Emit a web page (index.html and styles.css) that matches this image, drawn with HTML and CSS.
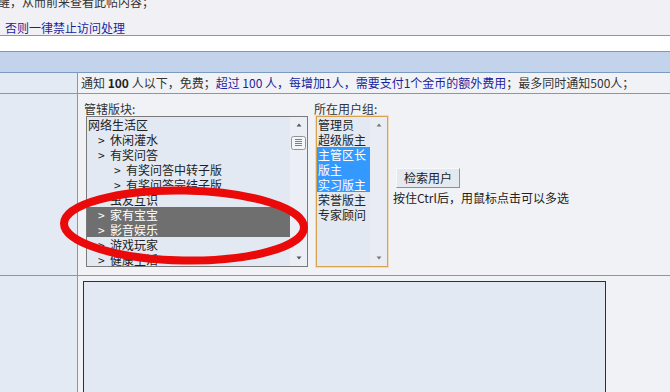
FILE: index.html
```html
<!DOCTYPE html>
<html lang="zh-CN">

<head>
    <meta charset="UTF-8">
    <meta name="viewport" content="width=device-width, initial-scale=1.0">
    <title>短消息通知</title>
    <link rel="stylesheet" href="styles.css">
</head>

<body>

    <div class="page">
        <div class="notice">
            <p class="notice-cut">醒，从而前来查看此帖内容；</p>
            <p class="notice-rule">否则一律禁止访问处理</p>
        </div>
        <div class="strip"></div>
        <div class="header"></div>

        <div class="row row-info">
            <div class="side"></div>
            <div class="main">通知 <b>100</b> 人以下，免费；<span class="paid">超过 100 人，每增加1人，需要支付1个金币的额外费用</span>；最多同时通知500人；</div>
        </div>

        <div class="row row-pick">
            <div class="side"></div>
            <div class="main picker">
                <div class="field">
                    <label>管辖版块:</label>
                    <div class="list list-forum">
                        <ul>
                            <li class="lv0">网络生活区</li>
                            <li class="lv1"><span class="gt">&gt;</span>休闲灌水</li>
                            <li class="lv1"><span class="gt">&gt;</span>有奖问答</li>
                            <li class="lv2"><span class="gt">&gt;</span>有奖问答中转子版</li>
                            <li class="lv2"><span class="gt">&gt;</span>有奖问答完结子版</li>
                            <li class="lv1"><span class="gt">&gt;</span>虫友互识</li>
                            <li class="lv1 on"><span class="gt">&gt;</span>家有宝宝</li>
                            <li class="lv1 on"><span class="gt">&gt;</span>影音娱乐</li>
                            <li class="lv1"><span class="gt">&gt;</span>游戏玩家</li>
                            <li class="lv1"><span class="gt">&gt;</span>健康生活</li>
                        </ul>
                        <svg class="scroll" width="17" height="149" viewBox="0 0 17 149">
                            <rect x="0" y="0" width="17" height="149" fill="#ebeef4" />
                            <polygon points="6.5,9.5 11.5,9.5 9,6.5" fill="#555" />
                            <rect x="1.5" y="19.5" width="14" height="13" rx="2" fill="#f4f6f9" stroke="#8f959e" />
                            <path d="M5 22.5h7M5 24.5h7M5 26.5h7M5 28.5h7" stroke="#7a808a" />
                            <polygon points="6.5,139.5 11.5,139.5 9,142.5" fill="#555" />
                        </svg>
                    </div>
                </div>

                <div class="field field-group">
                    <label>所在用户组:</label>
                    <div class="list list-group">
                        <ul>
                            <li>管理员</li>
                            <li>超级版主</li>
                            <li class="on">主管区长</li>
                            <li class="on">版主</li>
                            <li class="on">实习版主</li>
                            <li>荣誉版主</li>
                            <li>专家顾问</li>
                        </ul>
                        <svg class="scroll" width="17" height="149" viewBox="0 0 17 149">
                            <rect x="0" y="0" width="17" height="149" fill="#e9edf3" />
                            <polygon points="6.5,9.5 11.5,9.5 9,6.5" fill="#777" />
                            <polygon points="6.5,139.5 11.5,139.5 9,142.5" fill="#777" />
                        </svg>
                    </div>
                </div>

                <div class="actions">
                    <button class="search-btn">检索用户</button>
                    <p class="hint">按住Ctrl后，用鼠标点击可以多选</p>
                </div>
            </div>
        </div>

        <div class="row row-msg">
            <div class="side"></div>
            <div class="main">
                <textarea class="msg-box"></textarea>
            </div>
        </div>

        <!-- red annotation circle over the selected boards -->
        <svg class="mark" width="670" height="392" viewBox="0 0 670 392">
            <ellipse cx="184" cy="225.5" rx="120" ry="35" fill="none" stroke="#ea0a0a" stroke-width="8" transform="rotate(1 184 225.5)" />
        </svg>
    </div>

</body>

</html>
```

FILE: styles.css
```css
* {
    box-sizing: border-box;
    margin: 0;
    padding: 0;
}

body {
    font: 12px/15px "Noto Sans CJK SC", sans-serif;
    color: #333;
    background: #f1f1f5;
}

.page {
    position: relative;
    width: 670px;
    height: 392px;
    overflow: hidden;
}

.notice {
    height: 35px;
    overflow: hidden;
}

.notice-cut {
    margin: -6px 0 0 -2px;
}

.notice-rule {
    margin: 11px 0 0 5px;
    color: #1b1f9e;
}

.strip {
    height: 16px;
    border-top: 1px solid #7b9ac0;
    background: #fff;
}

.header {
    height: 21px;
    border-top: 1px solid #7b9ac0;
    background: #c2d3eb;
}

.row {
    display: grid;
    grid-template-columns: 78px 1fr;
    border-top: 1px solid #7b9ac0;
}

.side {
    background: #e4eaf3;
    border-right: 1px solid #7b9ac0;
}

.main {
    background: #f1f2f6;
}

.row-info .main {
    height: 20px;
    line-height: 20px;
    padding-left: 3px;
}

.row-info b {
    color: #222;
}

.paid {
    color: #1b1f9e;
}

.picker {
    display: flex;
    height: 181px;
    padding: 7px 0 0 6px;
}

.field label {
    display: block;
    height: 15px;
}

.list {
    display: flex;
    height: 151px;
    margin-left: 2px;
    background: #e3e9f2;
}

.list ul {
    flex: 1;
    list-style: none;
    overflow: hidden;
    color: #222;
}

.list li {
    height: 15px;
    white-space: nowrap;
}

.scroll {
    display: block;
    flex: none;
}

.list-forum {
    width: 222px;
    border: 1px solid #7a7a7a;
}

.list-forum .lv0 {
    padding-left: 1px;
}

.list-forum .lv1 {
    padding-left: 11px;
}

.list-forum .lv2 {
    padding-left: 27px;
}

.gt {
    display: inline-block;
    width: 12px;
}

.list-forum .on {
    background: #6f6f6f;
    color: #fff;
}

.field-group {
    margin-left: 6px;
}

.list-group {
    width: 72px;
    border: 1px solid #d9a24e;
    box-shadow: 0 0 0 1px rgba(236, 196, 130, 0.5);
}

.list-group li {
    padding-left: 1px;
}

.list-group .on {
    background: #3399ff;
    color: #fff;
}

.actions {
    margin: 67px 0 0 5px;
}

.search-btn {
    display: block;
    width: 64px;
    height: 20px;
    margin-left: 3px;
    font: 12px/18px "Noto Sans CJK SC", sans-serif;
    color: #222;
    background: #e4e8ef;
    border: 1px solid;
    border-color: #f7f8fb #8a919b #8a919b #f7f8fb;
}

.hint {
    margin-top: 2px;
    color: #222;
}

.row-msg .main {
    height: 200px;
    padding: 5px 0 0 5px;
}

.msg-box {
    display: block;
    width: 523px;
    height: 140px;
    border: 1px solid #2b2f3f;
    background: #e3e9f2;
    resize: none;
}

.mark {
    position: absolute;
    left: 0;
    top: 0;
    pointer-events: none;
}
```
